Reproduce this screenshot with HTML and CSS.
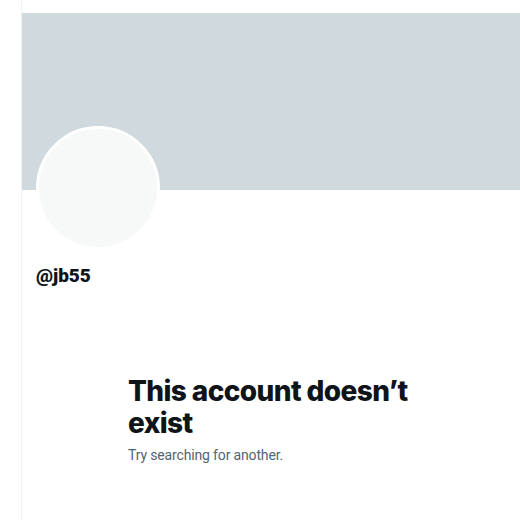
FILE: index.html
```html
<!DOCTYPE html>
<html>
<head>
<title>@jb55</title>
<meta name="viewport" content="width=device-width, initial-scale=1">
<link rel="stylesheet" href="styles.css">
</head>
<body>
<div class="column">
  <div class="banner"></div>
  <div class="profile">
    <div class="avatar"></div>
    <div class="handle">@jb55</div>
  </div>
  <div class="empty-state">
    <h1>This account doesn’t exist</h1>
    <p>Try searching for another.</p>
  </div>
</div>
</body>
</html>
```

FILE: styles.css
```css
body { margin: 0; background-color: #fff; font-family: Roboto, "Liberation Sans", Arial, sans-serif; color: #0f1419; }
.column { margin-left: 21px; border-left: 1px solid #eff3f4; padding-top: 13px; min-height: 507px; }
.banner { height: 177px; background-color: #cfd9de; }
.profile { padding-left: 14px; }
.avatar { width: 118px; height: 118px; margin-top: -64px; border: 3px solid #fff; border-radius: 50%; background-color: #f7f9f9; }
.handle { margin-top: 14px; font-size: 19px; font-weight: 900; line-height: 24px; }
.empty-state { margin: 87px 0 0 106px; width: 320px; }
.empty-state h1 { margin: 0; font-family: Inter, Roboto, sans-serif; font-size: 28px; font-weight: 800; line-height: 32px; letter-spacing: -0.6px; }
.empty-state p { margin: 6px 0 0; font-size: 14px; line-height: 20px; letter-spacing: -0.15px; color: #536471; }
```
